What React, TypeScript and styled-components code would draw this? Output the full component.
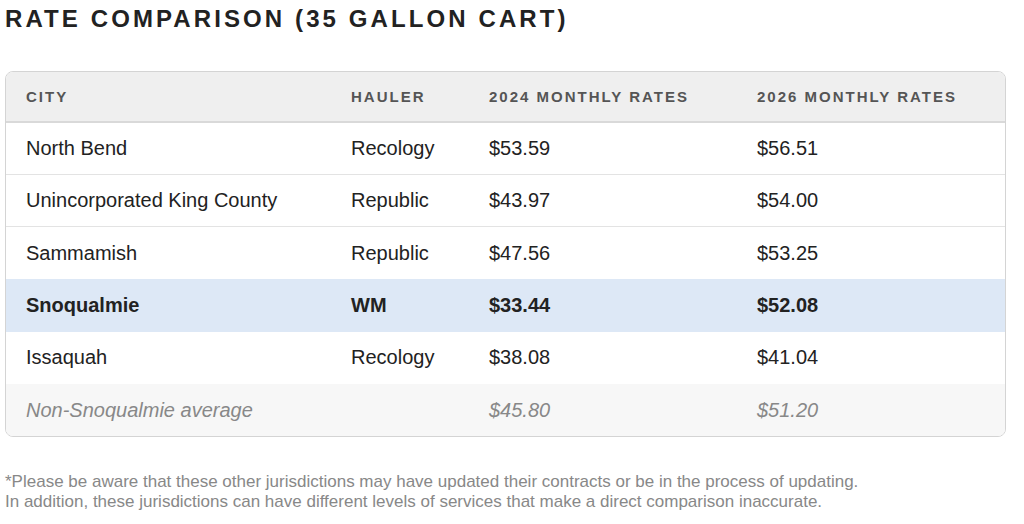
import React from "react";
import styled, { createGlobalStyle } from "styled-components";

const Global = createGlobalStyle`
  html, body { margin: 0; padding: 0; background: #fff; }
  body { font-family: "Liberation Sans", Arial, sans-serif; }
  *, *::before, *::after { box-sizing: border-box; }
`;

const Page = styled.div`
  width: 1006px;
  padding: 4px 0 0 5px;
`;

const Title = styled.h2`
  margin: 0;
  font-size: 24px;
  line-height: 29px;
  font-weight: 700;
  letter-spacing: 3.1px;
  color: #222;
`;

const TableWrap = styled.div`
  margin-top: 38px;
  border: 1px solid #d4d4d4;
  border-radius: 8px;
  overflow: hidden;
`;

const Table = styled.table`
  width: 100%;
  border-collapse: collapse;
  table-layout: fixed;
`;

const Th = styled.th<{ $w: number }>`
  width: ${(p) => p.$w}px;
  height: 50px;
  padding: 0 20px;
  text-align: left;
  background: #efefef;
  color: #555;
  font-size: 15px;
  font-weight: 700;
  letter-spacing: 2px;
  border-bottom: 2px solid #d9d9d9;
  white-space: nowrap;
`;

type Kind = "normal" | "highlight" | "average";

const Tr = styled.tr<{ $kind: Kind }>`
  background: ${(p) =>
    p.$kind === "highlight" ? "#dde8f6" : p.$kind === "average" ? "#f7f7f7" : "#fff"};
  & + & td { border-top: 1px solid #e3e3e3; }
`;

const Td = styled.td<{ $kind: Kind }>`
  height: 52.4px;
  padding: 0 20px;
  font-size: 20px;
  color: ${(p) => (p.$kind === "average" ? "#888" : "#222")};
  font-weight: ${(p) => (p.$kind === "highlight" ? 700 : 400)};
  font-style: ${(p) => (p.$kind === "average" ? "italic" : "normal")};
  white-space: nowrap;
`;

const Note = styled.p`
  margin: 35px 0 0;
  font-size: 17px;
  line-height: 20px;
  color: #888;
`;

const cols = [
  { label: "CITY", w: 325 },
  { label: "HAULER", w: 138 },
  { label: "2024 MONTHLY RATES", w: 268 },
  { label: "2026 MONTHLY RATES", w: 268 },
];

const rows: { cells: string[]; kind: Kind }[] = [
  { cells: ["North Bend", "Recology", "$53.59", "$56.51"], kind: "normal" },
  { cells: ["Unincorporated King County", "Republic", "$43.97", "$54.00"], kind: "normal" },
  { cells: ["Sammamish", "Republic", "$47.56", "$53.25"], kind: "normal" },
  { cells: ["Snoqualmie", "WM", "$33.44", "$52.08"], kind: "highlight" },
  { cells: ["Issaquah", "Recology", "$38.08", "$41.04"], kind: "normal" },
  { cells: ["Non-Snoqualmie average", "", "$45.80", "$51.20"], kind: "average" },
];

export default function App() {
  return (
    <>
      <Global />
      <Page>
        <Title>RATE COMPARISON (35 GALLON CART)</Title>
        <TableWrap>
          <Table>
            <thead>
              <tr>
                {cols.map((c) => (
                  <Th key={c.label} $w={c.w}>
                    {c.label}
                  </Th>
                ))}
              </tr>
            </thead>
            <tbody>
              {rows.map((r) => (
                <Tr key={r.cells[0]} $kind={r.kind}>
                  {r.cells.map((c, i) => (
                    <Td key={i} $kind={r.kind}>
                      {c}
                    </Td>
                  ))}
                </Tr>
              ))}
            </tbody>
          </Table>
        </TableWrap>
        <Note>
          *Please be aware that these other jurisdictions may have updated their contracts or be in the process of updating.
          <br />
          In addition, these jurisdictions can have different levels of services that make a direct comparison inaccurate.
        </Note>
      </Page>
    </>
  );
}
